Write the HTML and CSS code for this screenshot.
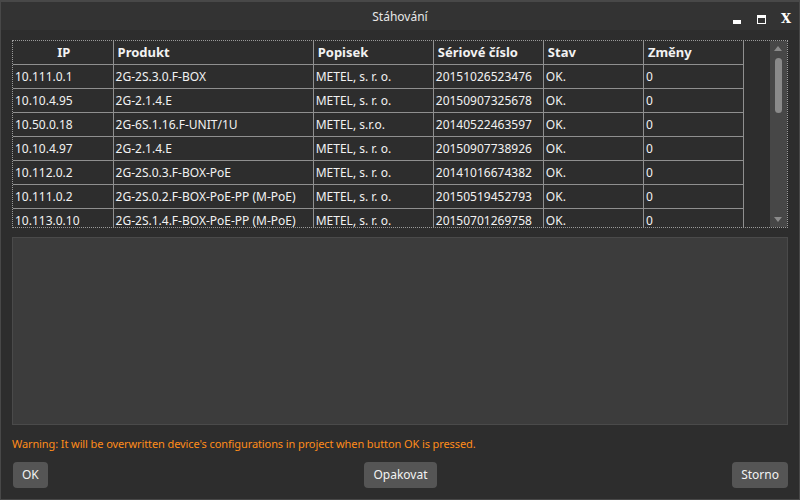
FILE: index.html
```html
<!DOCTYPE html>
<html>
<head>
<meta charset="utf-8">
<link rel="stylesheet" href="styles.css">
</head>
<body>
<div class="window">
  <div class="titlebar">
    <span class="title">Stáhování</span>
    <div class="controls">
      <span class="ctl-min"></span>
      <span class="ctl-max"></span>
      <span class="ctl-close">X</span>
    </div>
  </div>
  <div class="content">
    <div class="grid-frame">
      <div class="table-wrap">
        <table class="devices">
          <colgroup>
            <col class="c-ip"><col class="c-prod"><col class="c-pop"><col class="c-ser"><col class="c-stav"><col class="c-zm">
          </colgroup>
          <thead>
            <tr><th class="center">IP</th><th>Produkt</th><th>Popisek</th><th>Sériové číslo</th><th>Stav</th><th>Změny</th></tr>
          </thead>
          <tbody>
            <tr><td>10.111.0.1</td><td>2G-2S.3.0.F-BOX</td><td>METEL, s. r. o.</td><td>20151026523476</td><td>OK.</td><td>0</td></tr>
            <tr><td>10.10.4.95</td><td>2G-2.1.4.E</td><td>METEL, s. r. o.</td><td>20150907325678</td><td>OK.</td><td>0</td></tr>
            <tr><td>10.50.0.18</td><td>2G-6S.1.16.F-UNIT/1U</td><td>METEL, s.r.o.</td><td>20140522463597</td><td>OK.</td><td>0</td></tr>
            <tr><td>10.10.4.97</td><td>2G-2.1.4.E</td><td>METEL, s. r. o.</td><td>20150907738926</td><td>OK.</td><td>0</td></tr>
            <tr><td>10.112.0.2</td><td>2G-2S.0.3.F-BOX-PoE</td><td>METEL, s. r. o.</td><td>20141016674382</td><td>OK.</td><td>0</td></tr>
            <tr><td>10.111.0.2</td><td>2G-2S.0.2.F-BOX-PoE-PP (M-PoE)</td><td>METEL, s. r. o.</td><td>20150519452793</td><td>OK.</td><td>0</td></tr>
            <tr><td>10.113.0.10</td><td>2G-2S.1.4.F-BOX-PoE-PP (M-PoE)</td><td>METEL, s. r. o.</td><td>20150701269758</td><td>OK.</td><td>0</td></tr>
          </tbody>
        </table>
      </div>
      <div class="scrollbar">
        <span class="arrow-up"></span>
        <span class="thumb"></span>
        <span class="arrow-down"></span>
      </div>
    </div>
    <div class="log-panel"></div>
    <div class="warning">Warning: It will be overwritten device's configurations in project when button OK is pressed.</div>
    <div class="buttons">
      <button class="btn btn-left">OK</button>
      <button class="btn btn-center">Opakovat</button>
      <button class="btn btn-right">Storno</button>
    </div>
  </div>
</div>
</body>
</html>
```

FILE: styles.css
```css
html, body {
  margin: 0;
  padding: 0;
  background: #2d2d2d;
}
body {
  font-family: "Noto Sans", "Open Sans", sans-serif;
  font-size: 12px;
  color: #f0f0f0;
}
.window {
  width: 800px;
  height: 500px;
  box-sizing: border-box;
  border: 1px solid #484848;
  border-top: 2px solid #484848;
  background: #2d2d2d;
  display: flex;
  flex-direction: column;
}
.titlebar {
  height: 28px;
  background: #333333;
  display: flex;
  align-items: center;
  justify-content: center;
  position: relative;
  flex: none;
}
.title {
  color: #e8e8e8;
  font-size: 12px;
  margin-top: 1px;
}
.controls {
  position: absolute;
  right: 8px;
  top: 8px;
  display: flex;
  align-items: center;
}
.ctl-min {
  width: 8px;
  height: 4px;
  background: #fff;
  margin-top: 9px;
  margin-right: 16px;
}
.ctl-max {
  width: 7px;
  height: 5px;
  border: 1px solid #fff;
  border-top-width: 3px;
  margin-top: 3px;
  margin-right: 15px;
}
.ctl-close {
  font-family: "DejaVu Serif", serif;
  font-weight: bold;
  font-size: 13px;
  color: #fff;
  line-height: 12px;
  margin-top: 3px;
}
.content {
  flex: 1;
  display: flex;
  flex-direction: column;
  padding: 10px 11px 12px 11px;
}
.grid-frame {
  height: 188px;
  box-sizing: border-box;
  border: 1px dotted #9a9a9a;
  display: flex;
  background: #2d2d2d;
  overflow: hidden;
}
.table-wrap {
  flex: 1;
  overflow: hidden;
}
.devices {
  border-collapse: collapse;
  table-layout: fixed;
  width: 731px;
}
.c-ip { width: 100px; }
.c-prod { width: 200px; }
.c-pop { width: 120px; }
.c-ser { width: 110px; }
.c-stav { width: 100px; }
.c-zm { width: 100px; }
.devices th, .devices td {
  height: 23px;
  padding: 0 2px;
  border: 1px solid #8f8f8f;
  text-align: left;
  white-space: nowrap;
  overflow: hidden;
  color: #f2f2f2;
  font-weight: normal;
  font-size: 12px;
  line-height: 23px;
}
.devices th {
  font-weight: bold;
  font-size: 13px;
  padding-left: 4px;
  border-top: none;
}
.devices th.center { text-align: center; }
.devices tr > :first-child { border-left: none; }
.scrollbar {
  width: 17px;
  background: #474747;
  position: relative;
  flex: none;
  margin-left: 22px;
}
.arrow-up, .arrow-down {
  position: absolute;
  left: 4px;
  width: 0;
  height: 0;
  border-left: 4px solid transparent;
  border-right: 4px solid transparent;
}
.arrow-up {
  top: 5px;
  border-bottom: 5px solid #8a8a8a;
}
.arrow-down {
  bottom: 5px;
  border-top: 5px solid #8a8a8a;
}
.thumb {
  position: absolute;
  left: 5px;
  top: 17px;
  width: 7px;
  height: 55px;
  border-radius: 4px;
  background: #8a8a8a;
}
.log-panel {
  margin-top: 9px;
  height: 188px;
  box-sizing: border-box;
  background: #3c3c3c;
  border: 1px solid #4a4a4a;
}
.warning {
  margin-top: 10px;
  color: #ff8c1a;
  font-size: 11px;
  letter-spacing: -0.1px;
  height: 17px;
  line-height: 17px;
}
.buttons {
  margin-top: 10px;
  display: grid;
  grid-template-columns: 1fr auto 1fr;
  align-items: center;
  padding-left: 1px;
}
.btn {
  font-family: "Noto Sans", "Open Sans", sans-serif;
  font-size: 12px;
  color: #f2f2f2;
  background: #555555;
  border: none;
  border-radius: 4px;
  height: 26px;
  padding: 0 9px;
  line-height: 26px;
}
.btn-left { justify-self: start; }
.btn-center { justify-self: center; }
.btn-right { justify-self: end; }
```
